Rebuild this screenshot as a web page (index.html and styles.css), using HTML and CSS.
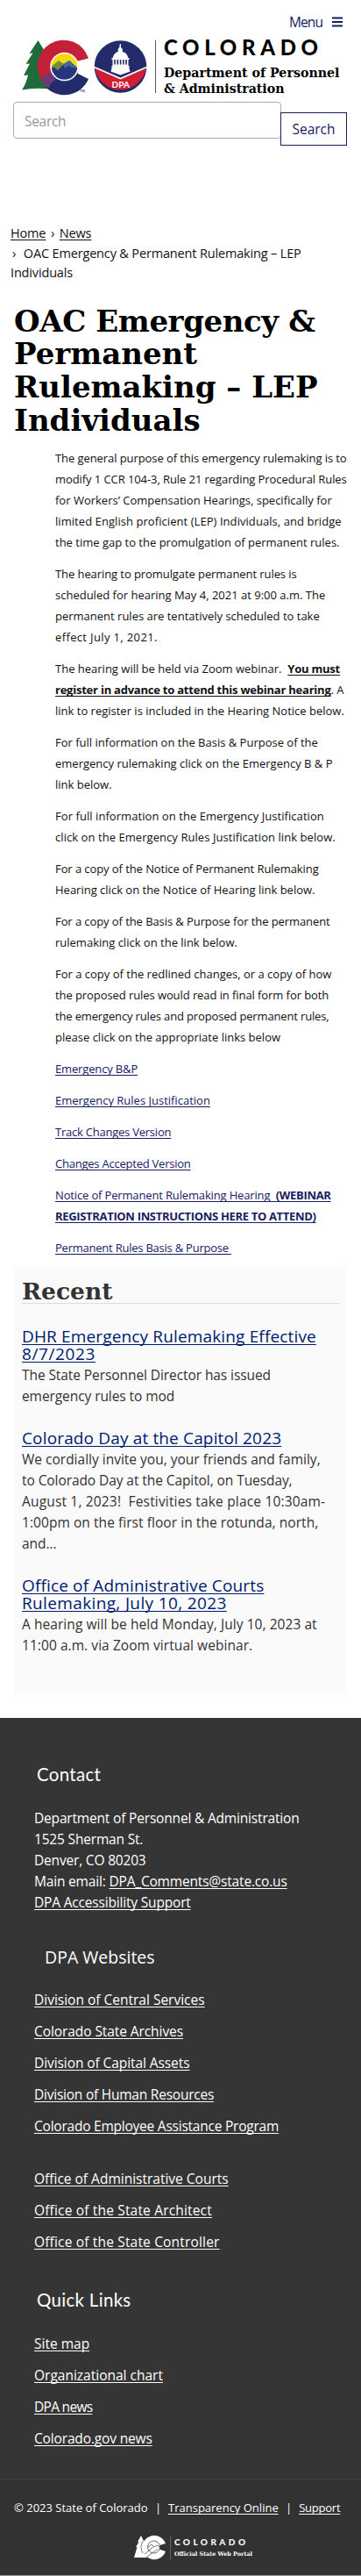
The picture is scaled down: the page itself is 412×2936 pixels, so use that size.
FILE: index.html
```html
<!DOCTYPE html>
<html lang="en">
<head>
<meta charset="utf-8">
<title>OAC Emergency &amp; Permanent Rulemaking – LEP Individuals</title>
<link rel="stylesheet" href="styles.css">
</head>
<body>
<header class="header">
  <a class="menu"><span class="menu-label">Menu</span>
    <svg width="12" height="12" viewBox="0 0 12 12"><path d="M0 1.500h12M0 6h12M0 10.500h12" stroke="#17205f" stroke-width="2"/></svg>
  </a>
  <svg class="logo" width="364" height="64" viewBox="0 0 364 64">
    <path fill="#1f6b3a" d="M18.500 1L8.500 16l4-.5L4.500 28l4.500-.5L2 41l5-.5Q5 50 0 57.500q14-3 34-1L40 20 27 15z"/>
    <path fill="#c4203a" d="M76 21.500A29.800 29.800 0 1 0 26 51L38 41A17 17 0 0 1 62 25z"/>
    <path fill="#232b6b" d="M31 55L36 42 62 38l14 7A29.800 29.800 0 0 1 27 54z"/>
    <path fill="#6e3a72" d="M21.500 45l14-9.500 5 8L28 55q-4-4-6.500-10z"/>
    <circle cx="48.500" cy="31" r="15.500" fill="#f7d80c"/>
    <path fill="#26357c" d="M33 33l9-7 6 3 6-5 10 9a15 15 0 0 1-30.500 2z"/>
    <path fill="#738f3c" d="M34 30.500L42 24l6 4-7 7-4-3z"/>
    <path fill="#3d68a8" d="M47 28l7-4 9 9-5-1-5-2-4 3z"/>
    <circle cx="48.500" cy="31" r="15.500" fill="none" stroke="#fff" stroke-width="1.600"/>
    <text class="tm" x="66" y="60">TM</text>
    <circle cx="112.500" cy="31" r="29.800" fill="#232b6b"/>
    <path fill="#cf2033" d="M83 31.700l29.500 13 29.500-13a29.800 29.800 0 0 1-59 0z"/>
    <path fill="none" stroke="#fff" stroke-width="1.700" d="M82.500 31.500l30 13 30-13"/>
    <path fill="#fff" d="M111.800 5h1.200v4l1.800 2v3c4 1 6 4 6.500 7h1.200v2h-1v7h1v3l1 3.500-11 4-11-4 1-3.500v-3h1v-7h-1v-2h1.200c.5-3 2.500-6 6-7v-3l1.600-2z"/>
    <path stroke="#232b6b" stroke-width="1.600" d="M106 23v5.500M109.300 23v5.500M112.600 23v5.500M115.900 23v5.500M119 23v5.500"/>
    <text class="dpa" x="102.500" y="55" textLength="20.500">DPA</text>
    <path d="M152.500 1v60" stroke="#555"/>
    <text class="co" x="162" y="18" textLength="176">COLORADO</text>
    <text class="dept" x="162" y="43" textLength="200.500" lengthAdjust="spacingAndGlyphs">Department of Personnel</text>
    <text class="dept" x="162" y="60.500" textLength="137.500" lengthAdjust="spacingAndGlyphs">&amp; Administration</text>
  </svg>
  <form class="search">
    <div class="field">Search</div>
    <div class="submit">Search</div>
  </form>
</header>
<main class="main">
  <nav class="crumbs"><a>Home</a> <span class="sep">›</span> <a>News</a><br><span class="sep first">›</span> OAC Emergency &amp; Permanent Rulemaking – LEP<br>Individuals</nav>
  <h1 class="title"><span class="snug">OAC Emergency &amp;</span><br>Permanent<br>Rulemaking – LEP<br>Individuals</h1>
  <article class="article">
    <p><span class="t1">The general purpose of this emergency rulemaking is to</span><br><span class="t1">modify 1 CCR 104-3, Rule 21 regarding Procedural Rules</span><br>for Workers’ Compensation Hearings, specifically for<br><span class="w1">limited English proficient (LEP) Individuals, and bridge</span><br>the time gap to the promulgation of permanent rules.</p>
    <p><span class="t1">The hearing to promulgate permanent rules is</span><br>scheduled for hearing May 4, 2021 at 9:00 a.m. The<br>permanent rules are tentatively scheduled to take<br><span class="w3">effect July 1, 2021.</span></p>
    <p>The hearing will be held via Zoom webinar.&nbsp; <strong class="must t3">You must<br>register in advance to attend this webinar hearing</strong>. A<br>link to register is included in the Hearing Notice below.</p>
    <p>For full information on the Basis &amp; Purpose of the<br>emergency rulemaking click on the Emergency B &amp; P<br>link below.</p>
    <p class="w1">For full information on the Emergency Justification<br>click on the Emergency Rules Justification link below.</p>
    <p><span class="t1">For a copy of the Notice of Permanent Rulemaking</span><br>Hearing click on the Notice of Hearing link below.</p>
    <p><span class="t1">For a copy of the Basis &amp; Purpose for the permanent</span><br>rulemaking click on the link below.</p>
    <p>For a copy of the redlined changes, or a copy of how<br><span class="t1">the proposed rules would read in final form for both</span><br><span class="t2">the emergency rules and proposed permanent rules,</span><br>please click on the appropriate links below</p>
    <p class="link"><a class="t2">Emergency B&amp;P</a></p>
    <p class="link"><a>Emergency Rules Justification</a></p>
    <p class="link"><a class="t3">Track Changes Version</a></p>
    <p class="link"><a class="t3">Changes Accepted Version</a></p>
    <p class="link"><a class="t2">Notice of Permanent Rulemaking Hearing&nbsp; <strong class="t4">(WEBINAR<br>REGISTRATION INSTRUCTIONS HERE TO ATTEND)</strong></a></p>
    <p class="link"><a class="t3">Permanent Rules Basis &amp; Purpose&nbsp;</a></p>
  </article>
  <aside class="recent">
    <h2 class="recent-title">Recent</h2>
    <section class="post">
      <h3><a>DHR Emergency Rulemaking Effective<br><span class="w4">8/7/2023</span></a></h3>
      <p class="t1">The State Personnel Director has issued<br>emergency rules to mod</p>
    </section>
    <section class="post">
      <h3><a>Colorado Day at the Capitol 2023</a></h3>
      <p>We cordially invite you, your friends and family,<br><span class="t1">to Colorado Day at the Capitol, on Tuesday,</span><br><span class="w2">August 1, 2023!&nbsp; Festivities take place 10:30am-</span><br><span class="w1">1:00pm on the first floor in the rotunda, north,</span><br>and…</p>
    </section>
    <section class="post">
      <h3><a>Office of Administrative Courts<br><span class="w3">Rulemaking, July 10, 2023</span></a></h3>
      <p class="w1">A hearing will be held Monday, July 10, 2023 at<br>11:00 a.m. via Zoom virtual webinar.</p>
    </section>
  </aside>
</main>
<footer class="footer">
  <section class="contact">
    <h2>Contact</h2>
    <p>Department of Personnel &amp; Administration<br>1525 Sherman St.<br>Denver, CO 80203<br>Main email: <a>DPA_Comments@state.co.us</a><br><a>DPA Accessibility Support</a></p>
  </section>
  <section class="sites">
    <h2>DPA Websites</h2>
    <ul>
      <li><a>Division of Central Services</a></li>
      <li><a class="t1">Colorado State Archives</a></li>
      <li><a class="t1">Division of Capital Assets</a></li>
      <li><a class="t3">Division of Human Resources</a></li>
      <li><a class="t3">Colorado Employee Assistance Program</a></li>
    </ul>
    <ul>
      <li><a>Office of Administrative Courts</a></li>
      <li><a class="w2">Office of the State Architect</a></li>
      <li><a class="w2">Office of the State Controller</a></li>
    </ul>
  </section>
  <section class="quick">
    <h2>Quick Links</h2>
    <ul>
      <li><a>Site map</a></li>
      <li><a>Organizational chart</a></li>
      <li><a class="t5">DPA news</a></li>
      <li><a class="t2">Colorado.gov news</a></li>
    </ul>
  </section>
</footer>
<div class="legal">
  <p>© 2023 State of Colorado <span class="bar">|</span> <a>Transparency Online</a> <span class="bar">|</span> <a class="t3">Support</a></p>
  <svg width="136" height="30" viewBox="0 0 136 30">
    <path fill="#fff" d="M8 1L4 8l1.500 0L2 14l1.500 0L0 26h14l6-20-8 3z"/>
    <path fill="#fff" d="M36 10A13.700 13.700 0 1 0 36 19L29 16.500V12z"/>
    <circle cx="22.500" cy="14" r="7" fill="#fff" stroke="#444" stroke-width=".8"/>
    <path fill="none" stroke="#555" stroke-width=".8" d="M16 14l4-3 3 3 3-2 3 2M12 22l11-9M15 25l12-9M10 21A14 14 0 0 1 10 7"/>
    <path d="M41.500 1v27" stroke="#666"/>
    <text class="co-sm" x="46" y="12" textLength="81">COLORADO</text>
    <text class="portal" x="46" y="24" textLength="89" lengthAdjust="spacingAndGlyphs">Official State Web Portal</text>
  </svg>
</div>
</body>
</html>
```
FILE: styles.css
```css
* { box-sizing: border-box; margin: 0; padding: 0; }
body {
  width: 412px;
  background: #fff;
  color: #111;
  font-family: "Open Sans", "Noto Sans", sans-serif;
  font-size: 15.500px;
  white-space: nowrap;
}
a { text-decoration: underline; text-underline-offset: 2px; text-decoration-skip-ink: none; }

/* Tracking steps, tight to wide */
.t5 { letter-spacing: -.7px; }
.t4 { letter-spacing: -.33px; }
.t3 { letter-spacing: -.23px; }
.t2 { letter-spacing: -.15px; }
.t1 { letter-spacing: -.08px; }
.w1 { letter-spacing: .06px; }
.w2 { letter-spacing: .17px; }
.w3 { letter-spacing: .36px; }
.w4 { letter-spacing: .6px; }

.header { height: 254px; padding: 13px 15px 0; }
.menu {
  display: flex;
  justify-content: flex-end;
  align-items: center;
  gap: 11px;
  height: 24px;
  padding-right: 6px;
  color: #17205f;
  text-decoration: none;
}
.menu-label { letter-spacing: -.9px; }
.logo { display: block; margin: 8px 0 0 10px; overflow: visible; }
.tm { font: 4px "Liberation Sans", sans-serif; }
.dpa { font: bold 10px Lato, sans-serif; fill: #fff; }
.co { font: 900 24px Lato, sans-serif; }
.dept { font: bold 15px "DejaVu Serif", serif; }
.search { display: flex; margin-top: 7px; }
.field {
  width: 306px;
  height: 42px;
  padding: 1px 0 0 12px;
  border: 1px solid #aaa;
  border-radius: 4px;
  color: #999;
  letter-spacing: -.3px;
  line-height: 40px;
}
.submit {
  width: 76px;
  height: 38px;
  margin: 12px 0 0 -1px;
  border: 1px solid #17205f;
  color: #17205f;
  line-height: 36px;
  text-align: center;
}

.main { height: 1704px; padding-top: 1px; }
.crumbs { padding-left: 12px; font-size: 14.500px; line-height: 22.500px; letter-spacing: -.16px; }
.sep { padding: 0 2px; }
.first { padding-right: 5px; }
.title {
  margin: 25px 0 0 16px;
  font: bold 34px/37.700px "DejaVu Serif", serif;
  color: #000;
}
.snug { letter-spacing: -.4px; }
.article { margin: 12px 0 0 63px; font-size: 13px; line-height: 24px; }
.article p { margin-bottom: 12px; }
.must { text-decoration: underline; text-underline-offset: 2px; text-decoration-skip-ink: none; }
.link { color: #17205f; }
.recent {
  width: 379px;
  height: 483px;
  margin: 7px 0 0 16px;
  padding: 12px 8px 0 9px;
  background: #fafafa;
  color: #333;
}
.recent-title {
  height: 28px;
  margin-bottom: 27px;
  border-bottom: 1px solid #ddd;
  font: bold 26.500px/28px "DejaVu Serif", serif;
}
.post { margin-bottom: 26px; line-height: 24px; }
.post p { padding-top: 2px; }
.post h3 { font-size: 19px; font-weight: 400; line-height: 20px; letter-spacing: .15px; color: #001a70; }

.footer {
  height: 869px;
  padding: 52px 0 0 39px;
  background: #353535;
  border-bottom: 2px solid #3d3d3d;
  color: #fff;
  line-height: 24px;
}
.footer h2 { margin-left: 3px; font: 400 20.500px/24px Lato, sans-serif; letter-spacing: .3px; }
.footer .sites h2 { margin-left: 12px; font-family: "Open Sans", sans-serif; font-size: 19.500px; letter-spacing: 0; }
.footer p { margin-top: 26px; letter-spacing: -.18px; }
.footer ul { margin-top: 24px; list-style: none; }
.footer ul + ul { margin-top: 36px; }
.footer li { margin-bottom: 12px; }
.sites { margin-top: 39px; }
.quick { margin-top: 42px; }
.quick ul { margin-top: 26px; }
.legal {
  height: 109px;
  padding-top: 19px;
  background: #323232;
  border-bottom: 1px solid #999;
  color: #fff;
  font-size: 13px;
  line-height: 24px;
}
.legal p { padding-left: 16px; }
.legal .bar { padding: 0 4.500px 0 5px; }
.legal svg { display: block; margin: 19px 0 0 153px; overflow: visible; }
.co-sm { font: 900 10px Lato, sans-serif; fill: #fff; }
.portal { font: bold 6.500px "DejaVu Serif", serif; fill: #fff; }
```
